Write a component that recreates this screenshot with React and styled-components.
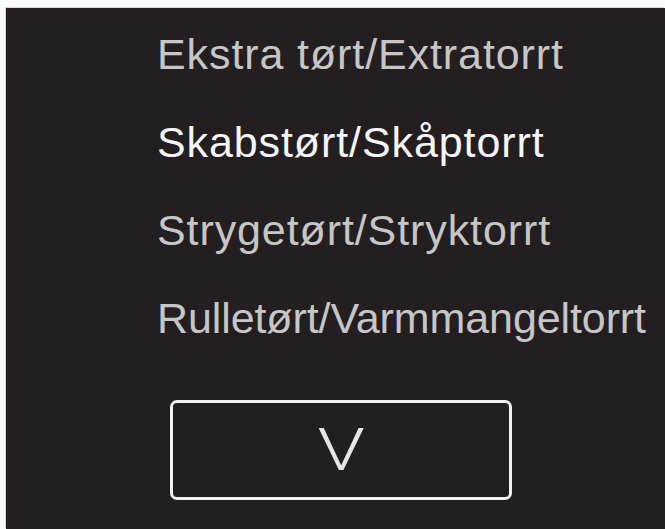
import React from 'react';
import styled, { createGlobalStyle } from 'styled-components';

const Global = createGlobalStyle`
	html, body {
		margin: 0;
		padding: 0;
		background: #fbfbfb;
		overflow: hidden;
	}
	body {
		font-family: "Liberation Sans", Arial, sans-serif;
	}
`

const Screen = styled.div`
	margin: 8px 0 0 6px;
	height: 521px;
	background: #231f20;
	display: flex;
	flex-direction: column;
	align-items: flex-start;
	padding: 1.5px 0 0 151px;
	box-sizing: border-box;
	box-shadow: -1px -1px 0 #d6d6d6;
`

const Options = styled.ul`
	list-style: none;
	margin: 0;
	padding: 0;
`

const Option = styled.li`
	height: 88px;
	line-height: 88px;
	font-size: 43px;
	letter-spacing: ${props => props.tight ? '-0.1px' : '0.9px'};
	white-space: nowrap;
	color: ${props => props.selected ? '#f5f5f5' : '#c6c6c6'};
`

const DownButton = styled.button`
	margin: 38px 0 0 13px;
	width: 342px;
	height: 100px;
	box-sizing: border-box;
	border: 3px solid #f2f2f2;
	border-radius: 7px;
	background: transparent;
	color: #e6e6e6;
	font-family: Roboto, "Liberation Sans", sans-serif;
	font-weight: 300;
	font-size: 59px;
	line-height: 1;
	display: flex;
	align-items: center;
	justify-content: center;
	padding: 0;
`

const Glyph = styled.span`
	display: inline-block;
	transform: scaleX(1.3);
`

const options = [
	'Ekstra tørt/Extratorrt',
	'Skabstørt/Skåptorrt',
	'Strygetørt/Stryktorrt',
	'Rulletørt/Varmmangeltorrt',
]

export default function App() {
	return (
		<React.Fragment>
			<Global />
			<Screen>
				<Options>
					{options.map((item, i) =>
						<Option key={item} selected={i === 1} tight={item.length > 22}>{item}</Option>
					)}
				</Options>
				<DownButton><Glyph>V</Glyph></DownButton>
			</Screen>
		</React.Fragment>
	)
}
